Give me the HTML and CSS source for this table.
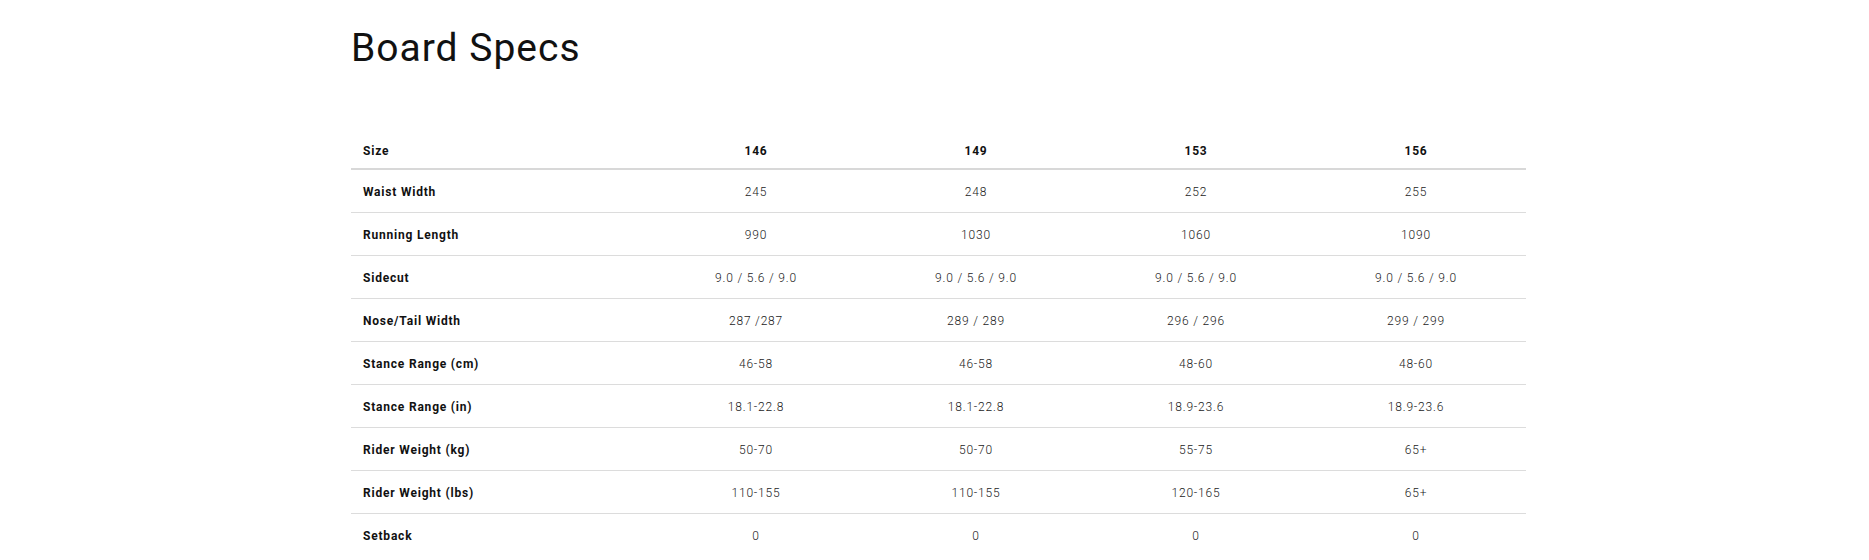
FILE: index.html
```html
<!DOCTYPE html>
<html>
<head>
<meta charset="utf-8">
<link rel="stylesheet" href="styles.css">
</head>
<body>
<div class="page">
  <h1 class="title">Board Specs</h1>
  <div class="specs">
    <div class="row head">
      <div class="label">Size</div><div class="val">146</div><div class="val">149</div><div class="val">153</div><div class="val">156</div>
    </div>
    <div class="row">
      <div class="label">Waist Width</div><div class="val">245</div><div class="val">248</div><div class="val">252</div><div class="val">255</div>
    </div>
    <div class="row">
      <div class="label">Running Length</div><div class="val">990</div><div class="val">1030</div><div class="val">1060</div><div class="val">1090</div>
    </div>
    <div class="row">
      <div class="label">Sidecut</div><div class="val">9.0 / 5.6 / 9.0</div><div class="val">9.0 / 5.6 / 9.0</div><div class="val">9.0 / 5.6 / 9.0</div><div class="val">9.0 / 5.6 / 9.0</div>
    </div>
    <div class="row">
      <div class="label">Nose/Tail Width</div><div class="val">287 /287</div><div class="val">289 / 289</div><div class="val">296 / 296</div><div class="val">299 / 299</div>
    </div>
    <div class="row">
      <div class="label">Stance Range (cm)</div><div class="val">46-58</div><div class="val">46-58</div><div class="val">48-60</div><div class="val">48-60</div>
    </div>
    <div class="row">
      <div class="label">Stance Range (in)</div><div class="val">18.1-22.8</div><div class="val">18.1-22.8</div><div class="val">18.9-23.6</div><div class="val">18.9-23.6</div>
    </div>
    <div class="row">
      <div class="label">Rider Weight (kg)</div><div class="val">50-70</div><div class="val">50-70</div><div class="val">55-75</div><div class="val">65+</div>
    </div>
    <div class="row">
      <div class="label">Rider Weight (lbs)</div><div class="val">110-155</div><div class="val">110-155</div><div class="val">120-165</div><div class="val">65+</div>
    </div>
    <div class="row last">
      <div class="label">Setback</div><div class="val">0</div><div class="val">0</div><div class="val">0</div><div class="val">0</div>
    </div>
  </div>
</div>
</body>
</html>
```
FILE: styles.css
```css
html, body {
  margin: 0;
  padding: 0;
  background: #ffffff;
  color: #111111;
  font-family: Roboto, "Liberation Sans", sans-serif;
}
.page {
  width: 1175px;
  margin-left: 351px;
}
.title {
  margin: 0;
  padding-top: 24px;
  font-size: 39px;
  line-height: 48px;
  font-weight: 400;
  letter-spacing: 1px;
  color: #111;
}
.specs {
  margin-top: 61px;
}
.row {
  display: grid;
  grid-template-columns: 295px repeat(4, 1fr);
  align-items: center;
  height: 42px;
  border-bottom: 1px solid #dcdcdc;
  font-size: 12px;
  letter-spacing: 0.8px;
}
.row > div {
  padding-top: 2px;
}
.row.head {
  height: 35px;
  border-bottom: 2px solid #d8d8d8;
}
.row.head > div {
  padding-top: 0;
}
.row.last {
  border-bottom: none;
}
.label {
  padding-left: 12px;
  font-weight: 700;
  color: #111;
}
.val {
  text-align: center;
  font-weight: 300;
  color: #1a1a1a;
}
.head .val {
  font-weight: 700;
  color: #111;
}
```
